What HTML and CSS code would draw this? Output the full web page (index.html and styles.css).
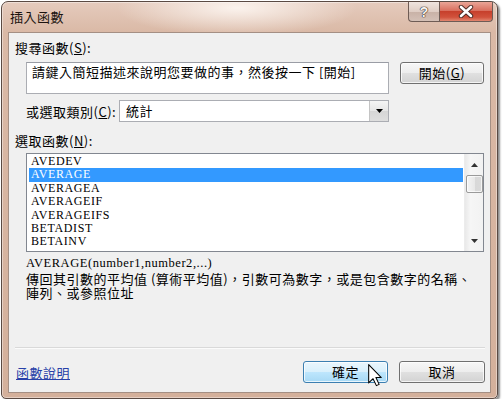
FILE: index.html
```html
<!DOCTYPE html>
<html lang="zh-Hant">
<head>
<meta charset="utf-8">
<title>插入函數</title>
<link rel="stylesheet" href="styles.css">
</head>
<body>
<div class="window">
  <div class="titlebar">
    <span class="title">插入函數</span>
    <div class="caption-buttons">
      <span class="cap-btn help">?</span>
      <span class="cap-btn close">
        <svg width="16" height="13" viewBox="0 0 16 13"><path d="M3 2 L13 11 M13 2 L3 11" stroke="#4a2a24" stroke-width="4.4" stroke-linecap="round"/><path d="M3 2 L13 11 M13 2 L3 11" stroke="#fff" stroke-width="2.6" stroke-linecap="round"/></svg>
      </span>
    </div>
  </div>
  <div class="client">
    <div class="label">搜尋函數(<u>S</u>):</div>
    <div class="search-row">
      <div class="textbox">請鍵入簡短描述來說明您要做的事，然後按一下 [開始]</div>
      <button class="btn go">開始(<u>G</u>)</button>
    </div>
    <div class="cat-row">
      <span class="cat-label">或選取類別(<u>C</u>):</span>
      <div class="combo">
        <span class="combo-text">統計</span>
        <span class="combo-arrow"><svg width="7" height="4" viewBox="0 0 7 4"><path d="M0 0 H7 L3.5 4 Z" fill="#000"/></svg></span>
      </div>
    </div>
    <div class="label fn-label">選取函數(<u>N</u>):</div>
    <div class="listbox">
      <ul class="items">
        <li>AVEDEV</li>
        <li class="selected">AVERAGE</li>
        <li>AVERAGEA</li>
        <li>AVERAGEIF</li>
        <li>AVERAGEIFS</li>
        <li>BETADIST</li>
        <li>BETAINV</li>
      </ul>
      <div class="scrollbar">
        <span class="sb-arrow"><svg width="7" height="4" viewBox="0 0 7 4"><path d="M0 4 H7 L3.5 0 Z" fill="#333"/></svg></span>
        <span class="sb-thumb"></span>
        <span class="sb-track"></span>
        <span class="sb-arrow"><svg width="7" height="4" viewBox="0 0 7 4"><path d="M0 0 H7 L3.5 4 Z" fill="#333"/></svg></span>
      </div>
    </div>
    <div class="syntax">AVERAGE(number1,number2,...)</div>
    <div class="desc">
      <div class="desc-line">傳回其引數的平均值 (算術平均值)，引數可為數字，或是包含數字的名稱、</div>
      <div class="desc-line">陣列、或參照位址</div>
    </div>
    <div class="separator"></div>
    <div class="footer">
      <a class="help-link" href="#">函數說明</a>
      <div class="footer-buttons">
        <button class="btn ok">確定
          <svg class="cursor" width="14" height="23" viewBox="0 0 12 20"><path d="M0.5 0.5 V16.5 L4.3 12.8 L7.2 18.8 L9.6 17.7 L6.8 11.8 H11.5 Z" fill="#fff" stroke="#000" stroke-width="0.9" stroke-linejoin="round"/></svg>
        </button>
        <button class="btn cancel">取消</button>
      </div>
    </div>
  </div>
</div>
</body>
</html>
```

FILE: styles.css
```css
* { box-sizing: border-box; }

html, body {
  margin: 0;
  background: #ffffff;
}

body {
  font-family: "Noto Sans CJK TC", "Noto Sans", sans-serif;
  font-size: 13px;
  letter-spacing: 0.5px;
  color: #000;
}

.window {
  margin: 1px 0 0 1px;
  width: 497px;
  height: 398px;
  border: 1px solid #5a4a43;
  border-radius: 7px 7px 5px 5px;
  padding: 0 6px 5px 6px;
  display: flex;
  flex-direction: column;
  background:
    radial-gradient(ellipse 120px 28px at 235px 6px, rgba(255,250,246,0.85), rgba(255,250,246,0)),
    linear-gradient(#e5cbbd, #dab9a6 30px, #d4b09b);
  box-shadow: 2px 2px 2px rgba(0,0,0,0.45), inset 0 0 0 1px rgba(255,255,255,0.4);
}

.titlebar {
  height: 30px;
  display: flex;
  justify-content: space-between;
  align-items: flex-start;
}

.title {
  margin-top: 6px;
  padding-left: 2px;
  line-height: 18px;
  color: #1c1410;
}

.caption-buttons {
  display: flex;
  margin-right: -2px;
}

.cap-btn {
  height: 20px;
  display: flex;
  align-items: center;
  justify-content: center;
  border: 1px solid #6e5c55;
  border-top: none;
}

.help {
  width: 31px;
  border-right: none;
  border-radius: 0 0 0 4px;
  background: linear-gradient(#efe4de, #dfcdc4 50%, #c8b1a6 51%, #d4c0b6);
  font-family: "Liberation Sans", sans-serif;
  font-weight: bold;
  font-size: 14px;
  letter-spacing: 0;
  color: #f6f2f0;
  text-shadow: 0 0 1px #2e2420, 0 0 1px #2e2420, 0 0 1px #2e2420;
}

.close {
  width: 54px;
  border-radius: 0 0 4px 0;
  background: linear-gradient(#eaa597, #d9705f 45%, #c7402c 50%, #d1523c 80%, #e2866f);
}

.client {
  flex: 1;
  background: #f0f0f0;
  border: 1px solid #a48f84;
  padding: 0 5px 0 6px;
  display: flex;
  flex-direction: column;
}

.label {
  margin-top: 7px;
  line-height: 16px;
}

.fn-label {
  margin-top: 11px;
}

.search-row {
  margin: 6px 0 0 11px;
  display: flex;
  align-items: flex-start;
  gap: 11px;
}

.textbox {
  width: 363px;
  height: 32px;
  background: #fff;
  border: 1px solid #abadb3;
  border-top-color: #9a9da5;
  padding: 0 5px;
  line-height: 18px;
}

.btn {
  font-family: inherit;
  font-size: 13px;
  letter-spacing: 0.5px;
  color: #000;
  height: 22px;
  padding: 0;
  border: 1px solid #707070;
  border-radius: 3px;
  background: linear-gradient(#f7f7f7, #ededed 50%, #e0e0e0 51%, #d3d3d3);
  box-shadow: inset 0 0 0 1px rgba(255,255,255,0.75);
  line-height: 18px;
}

.go {
  width: 84px;
}

.cat-row {
  margin: 6px 0 0 11px;
  display: flex;
  align-items: center;
}

.cat-label {
  width: 93px;
}

.combo {
  width: 270px;
  height: 22px;
  background: #fff;
  border: 1px solid #abadb3;
  display: flex;
  align-items: stretch;
}

.combo-text {
  flex: 1;
  padding-left: 6px;
  line-height: 19px;
}

.combo-arrow {
  width: 19px;
  border-left: 1px solid #c4c4c4;
  background: linear-gradient(#f5f5f5, #e6e6e6 50%, #d6d6d6 51%, #dedede);
  display: flex;
  align-items: center;
  justify-content: center;
}

.listbox {
  margin: 4px 0 0 11px;
  width: 458px;
  height: 99px;
  background: #fff;
  border: 1px solid #828790;
  display: flex;
}

.items {
  flex: 1;
  list-style: none;
  margin: 0;
  padding: 1px 1px 0 2px;
  font-family: "Liberation Serif", serif;
  font-size: 12px;
  letter-spacing: 0.6px;
  line-height: 13.4px;
}

.items li {
  padding-left: 2px;
}

.items .selected {
  background: #3399ff;
  color: #fff;
}

.scrollbar {
  width: 19px;
  background: linear-gradient(90deg, #e9e9e9, #f6f6f6 30%, #f2f2f2);
  border-left: 1px solid #ececec;
  display: flex;
  flex-direction: column;
  align-items: center;
}

.sb-arrow {
  height: 21px;
  width: 100%;
  display: flex;
  align-items: center;
  justify-content: center;
}

.sb-thumb {
  width: 17px;
  height: 18px;
  border: 1px solid #9a9a9a;
  border-radius: 2px;
  background: linear-gradient(90deg, #f4f4f4, #e8e8e8 50%, #d8d8d8 51%, #dadada);
  box-shadow: inset 0 0 0 1px rgba(255,255,255,0.7);
}

.sb-track {
  flex: 1;
}

.syntax {
  margin: 4px 0 0 11px;
  font-family: "Liberation Serif", serif;
  font-size: 12.5px;
  letter-spacing: 0.55px;
  line-height: 14px;
}

.desc {
  margin: 2px 0 0 11px;
}

.desc-line {
  height: 14px;
  line-height: 14px;
  white-space: nowrap;
}

.separator {
  margin-top: auto;
  height: 2px;
  border-top: 1px solid #d9d9d9;
  border-bottom: 1px solid #fbfbfb;
}

.footer {
  margin-top: 12px;
  margin-bottom: 9px;
  display: flex;
  align-items: center;
  justify-content: space-between;
}

.help-link {
  margin-left: 1px;
  color: #2740a8;
  text-decoration: underline;
}

.footer-buttons {
  display: flex;
  gap: 11px;
}

.ok {
  position: relative;
  width: 85px;
  border-color: #3c7fb1;
  background: linear-gradient(#eaf6fd, #d9f0fc 50%, #bee6fd 51%, #a7d9f5);
}

.cancel {
  width: 86px;
}

.cursor {
  position: absolute;
  left: 64px;
  top: 2px;
}
```
